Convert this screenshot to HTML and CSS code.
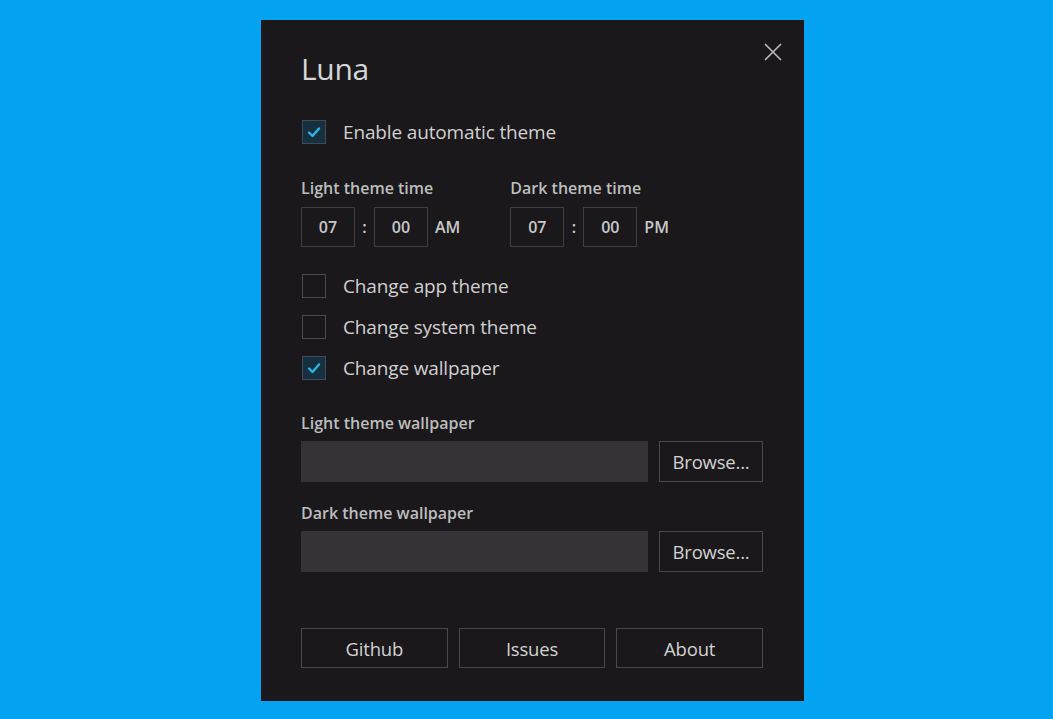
FILE: index.html
```html
<!DOCTYPE html>
<html lang="en">
<head>
    <meta charset="UTF-8">
    <title>Luna</title>
    <link rel="stylesheet" href="styles.css">
</head>
<body>
    <div class="window">
        <button class="close" aria-label="Close">
            <svg width="20" height="20" viewBox="0 0 20 20"><path d="M2 2 L18 18 M18 2 L2 18" stroke="#bdbdbd" stroke-width="1.6" fill="none"/></svg>
        </button>
        <h1 class="title">Luna</h1>

        <label class="check first">
            <span class="box checked"><svg width="16" height="16" viewBox="0 0 16 16"><path d="M3 8.5 L6.5 12 L13 4.5" stroke="#2cb4e8" stroke-width="2.4" fill="none" stroke-linecap="round" stroke-linejoin="round"/></svg></span>
            Enable automatic theme
        </label>

        <div class="times">
            <div class="time-group">
                <div class="label">Light theme time</div>
                <div class="time-row">
                    <span class="tbox">07</span><span class="colon">:</span><span class="tbox">00</span><span class="ampm">AM</span>
                </div>
            </div>
            <div class="time-group">
                <div class="label">Dark theme time</div>
                <div class="time-row">
                    <span class="tbox">07</span><span class="colon">:</span><span class="tbox">00</span><span class="ampm">PM</span>
                </div>
            </div>
        </div>

        <div class="options">
            <label class="check"><span class="box"></span>Change app theme</label>
            <label class="check"><span class="box"></span>Change system theme</label>
            <label class="check"><span class="box checked"><svg width="16" height="16" viewBox="0 0 16 16"><path d="M3 8.5 L6.5 12 L13 4.5" stroke="#2cb4e8" stroke-width="2.4" fill="none" stroke-linecap="round" stroke-linejoin="round"/></svg></span>Change wallpaper</label>
        </div>

        <div class="wall first-wall">
            <div class="label">Light theme wallpaper</div>
            <div class="wall-row">
                <div class="path"></div>
                <button class="btn browse">Browse...</button>
            </div>
        </div>
        <div class="wall">
            <div class="label">Dark theme wallpaper</div>
            <div class="wall-row">
                <div class="path"></div>
                <button class="btn browse">Browse...</button>
            </div>
        </div>

        <div class="footer">
            <button class="btn">Github</button>
            <button class="btn">Issues</button>
            <button class="btn">About</button>
        </div>
    </div>
</body>
</html>
```

FILE: styles.css
```css
body { margin: 0; background: #03a3f1; font-family: "Open Sans", "Noto Sans", sans-serif; color: #d2d2d2; padding: 20px 0 0 261px; height: 719px; box-sizing: border-box; overflow: hidden; }
.window { position: relative; width: 543px; height: 681px; box-sizing: border-box; background: #1a181b; padding: 29px 41px 0 40px; }
.close { position: absolute; top: 22px; right: 21px; background: none; border: none; padding: 0; width: 20px; height: 20px; cursor: pointer; }
.title { margin: 0; font-weight: 400; font-size: 30px; line-height: 40px; color: #d6d6d6; letter-spacing: -0.3px; }

.check { display: flex; align-items: center; height: 32px; font-size: 19px; letter-spacing: -0.15px; color: #d0d0d0; }
.check.first { margin-top: 27px; }
.box { width: 22px; height: 22px; border: 1px solid #4b4a4d; margin: 0 17px 0 1px; display: flex; align-items: center; justify-content: center; }
.box.checked { background: #17303f; border-color: #3d4c57; }

.times { display: flex; gap: 50px; margin-top: 30px; }
.label { font-size: 16px; font-weight: 600; line-height: 20px; color: #bdbdbd; letter-spacing: 0; }
.time-row { display: flex; align-items: center; margin-top: 9px; }
.tbox { width: 54px; height: 40px; box-sizing: border-box; border: 1px solid #3f3e41; display: flex; align-items: center; justify-content: center; font-size: 16px; font-weight: 600; color: #c8c8c8; }
.colon { width: 19px; text-align: center; font-size: 16px; font-weight: 600; }
.ampm { margin-left: 7px; font-size: 16px; font-weight: 600; color: #c8c8c8; }

.options { margin-top: 23px; display: flex; flex-direction: column; gap: 9px; }

.wall { margin-top: 21px; }
.wall.first-wall { margin-top: 29px; }
.wall-row { display: flex; gap: 11px; margin-top: 8px; }
.path { flex: 1; height: 41px; background: #353337; }
.btn { background: #1a181b; border: 1px solid #4a494c; color: #d2d2d2; font-family: inherit; font-size: 18.5px; letter-spacing: -0.2px; height: 41px; padding: 0; cursor: pointer; }
.browse { width: 104px; }

.footer { display: grid; grid-template-columns: repeat(3, 1fr); gap: 11px; margin-top: 56px; }
.footer .btn { height: 40px; }
```
